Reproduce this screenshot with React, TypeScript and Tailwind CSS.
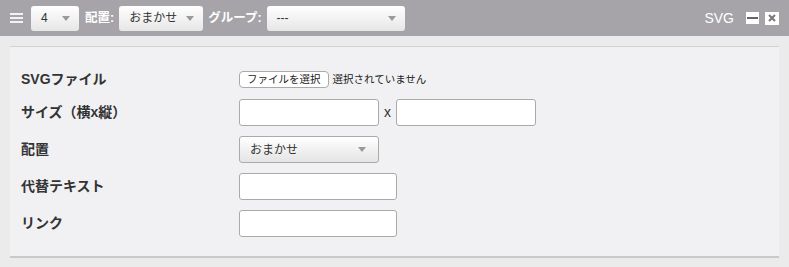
import React from "react";

const font = { fontFamily: '"Liberation Sans", "Noto Sans CJK JP", sans-serif' };

function Arrow({ className = "" }: { className?: string }) {
  return (
    <svg width="8" height="5" viewBox="0 0 8 5" className={className}>
      <path d="M0 0 L8 0 L4 5 Z" fill="#9a9a9a" />
    </svg>
  );
}

function HeaderSelect({ text, width }: { text: string; width: string }) {
  return (
    <div
      className={`${width} h-[25px] rounded-[3px] bg-gradient-to-b from-white to-[#e6e6e6] flex items-center justify-between pl-[10px] pr-[9px] text-[12px] text-[#333]`}
    >
      <span>{text}</span>
      <Arrow />
    </div>
  );
}

function Label({ children }: { children: React.ReactNode }) {
  return <div className="w-[218px] shrink-0 text-[14px] font-bold text-[#333]">{children}</div>;
}

function TextInput({ w = "w-[140px]" }: { w?: string }) {
  return <div className={`${w} h-[27px] bg-white border border-[#aaaaaa] rounded-[3px]`} />;
}

export default function App() {
  return (
    <div className="w-[789px] h-[267px] bg-[#ebebeb] overflow-hidden" style={font}>
      <div className="h-[36px] bg-[#a6a4a9] flex items-center pl-[10px] pr-[10px]">
        <div className="flex flex-col gap-[2px] w-[13px]">
          <div className="h-[2px] bg-[#f2f2f2]" />
          <div className="h-[2px] bg-[#f2f2f2]" />
          <div className="h-[2px] bg-[#f2f2f2]" />
        </div>
        <div className="ml-[8px]">
          <HeaderSelect text="4" width="w-[48px]" />
        </div>
        <span className="ml-[6px] text-white font-bold text-[12.5px]">配置:</span>
        <div className="ml-[5px]">
          <HeaderSelect text="おまかせ" width="w-[84px]" />
        </div>
        <span className="ml-[5px] text-white font-bold text-[12.5px]">グループ:</span>
        <div className="ml-[5px]">
          <HeaderSelect text="---" width="w-[138px]" />
        </div>
        <div className="flex-1" />
        <span className="text-white text-[14px]">SVG</span>
        <div className="ml-[12px] w-[13px] h-[12px] bg-white flex items-center justify-center">
          <div className="w-[11px] h-[2px] bg-[#666]" />
        </div>
        <div className="ml-[6px] w-[14px] h-[13px] bg-white flex items-center justify-center">
          <svg width="8" height="8" viewBox="0 0 8 8">
            <path d="M1 1 L7 7 M7 1 L1 7" stroke="#777" strokeWidth="2" />
          </svg>
        </div>
      </div>
      <div className="px-[10px] pt-[10px]">
        <div className="bg-[#f1f1f3] border-t border-[#d2d2d2] border-b-2 border-b-[#c9c9c9] pt-[19px] pb-[19px] pl-[11px]">
          <div className="flex items-center h-[27px]">
            <Label>SVGファイル</Label>
            <div className="h-[17px] px-[7px] bg-white border border-[#aaa] rounded-[4px] flex items-center text-[10.5px] text-[#222]">
              ファイルを選択
            </div>
            <span className="ml-[4px] text-[10.5px] text-[#222]">選択されていません</span>
          </div>
          <div className="flex items-center h-[27px] mt-[6px]">
            <Label>サイズ（横x縦）</Label>
            <TextInput />
            <span className="mx-[5px] text-[14px] text-[#333]">x</span>
            <TextInput />
          </div>
          <div className="flex items-center h-[27px] mt-[10px]">
            <Label>配置</Label>
            <div className="w-[140px] h-[27px] rounded-[3px] border border-[#aaaaaa] bg-gradient-to-b from-white to-[#e4e4e4] flex items-center justify-between pl-[10px] pr-[12px] text-[12px] text-[#333]">
              <span>おまかせ</span>
              <Arrow />
            </div>
          </div>
          <div className="flex items-center h-[27px] mt-[10px]">
            <Label>代替テキスト</Label>
            <TextInput w="w-[158px]" />
          </div>
          <div className="flex items-center h-[27px] mt-[10px]">
            <Label>リンク</Label>
            <TextInput w="w-[158px]" />
          </div>
        </div>
      </div>
    </div>
  );
}
